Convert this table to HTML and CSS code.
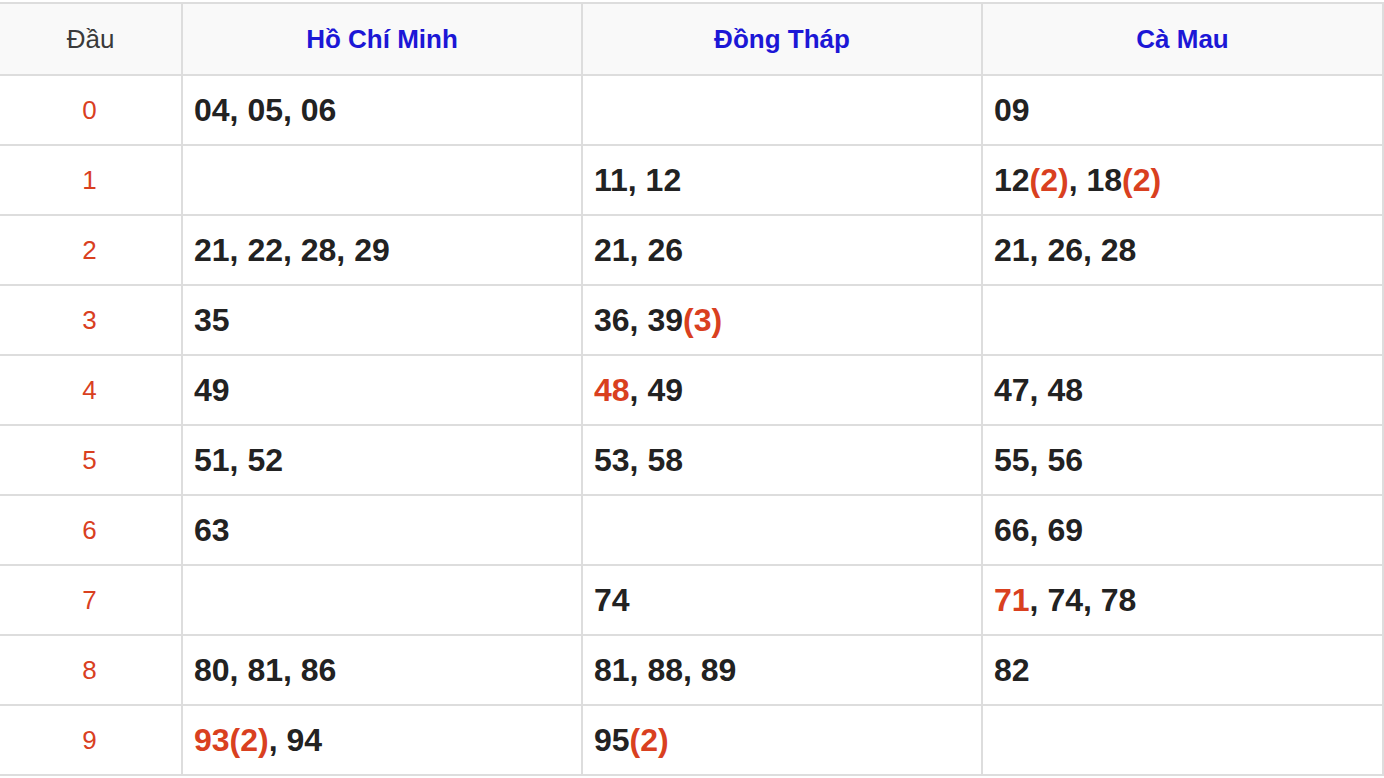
FILE: index.html
```html
<!DOCTYPE html>
<html lang="vi">
<head>
<meta charset="utf-8">
<title>Loto</title>
<link rel="stylesheet" href="styles.css">
</head>
<body>
<table class="loto">
  <colgroup>
    <col class="c-dau"><col class="c-prov"><col class="c-prov"><col class="c-prov">
  </colgroup>
  <thead>
    <tr>
      <th class="dau-h">Đầu</th>
      <th class="prov">Hồ Chí Minh</th>
      <th class="prov">Đồng Tháp</th>
      <th class="prov">Cà Mau</th>
    </tr>
  </thead>
  <tbody>
    <tr><td class="dau">0</td><td>04, 05, 06</td><td></td><td>09</td></tr>
    <tr><td class="dau">1</td><td></td><td>11, 12</td><td>12<span class="hot">(2)</span>, 18<span class="hot">(2)</span></td></tr>
    <tr><td class="dau">2</td><td>21, 22, 28, 29</td><td>21, 26</td><td>21, 26, 28</td></tr>
    <tr><td class="dau">3</td><td>35</td><td>36, 39<span class="hot">(3)</span></td><td></td></tr>
    <tr><td class="dau">4</td><td>49</td><td><span class="hot">48</span>, 49</td><td>47, 48</td></tr>
    <tr><td class="dau">5</td><td>51, 52</td><td>53, 58</td><td>55, 56</td></tr>
    <tr><td class="dau">6</td><td>63</td><td></td><td>66, 69</td></tr>
    <tr><td class="dau">7</td><td></td><td>74</td><td><span class="hot">71</span>, 74, 78</td></tr>
    <tr><td class="dau">8</td><td>80, 81, 86</td><td>81, 88, 89</td><td>82</td></tr>
    <tr><td class="dau">9</td><td><span class="hot">93(2)</span>, 94</td><td>95<span class="hot">(2)</span></td><td></td></tr>
  </tbody>
</table>
</body>
</html>
```

FILE: styles.css
```css
html, body {
  margin: 0;
  padding: 0;
  background: #ffffff;
}

.loto {
  border-collapse: separate;
  border-spacing: 0;
  table-layout: fixed;
  width: 1384px;
  margin-top: 2px;
  border-top: 2px solid #dddddd;
  font-family: "Liberation Sans", Arial, Helvetica, sans-serif;
}

.c-dau { width: 183px; }
.c-prov { width: 400px; }
.loto col.c-prov:last-child { width: 401px; }

.loto th,
.loto td {
  border-right: 2px solid #dddddd;
  border-bottom: 2px solid #dddddd;
  padding: 0 0 0 11px;
  vertical-align: middle;
  box-sizing: border-box;
}

.loto thead th {
  height: 72px;
  background: #f9f9f9;
  text-align: center;
  padding: 0;
  font-size: 26px;
}

.loto th.dau-h {
  font-weight: normal;
  color: #3a3a3a;
}

.loto th.prov {
  font-weight: bold;
  color: #1c17d6;
}

.loto tbody td {
  height: 70px;
  font-size: 32px;
  font-weight: bold;
  color: #222222;
  text-align: left;
}

.loto tbody td.dau {
  text-align: center;
  padding: 0 2px 0 0;
  font-size: 26px;
  font-weight: normal;
  color: #d9401f;
}

.hot {
  color: #d9401f;
}
```
